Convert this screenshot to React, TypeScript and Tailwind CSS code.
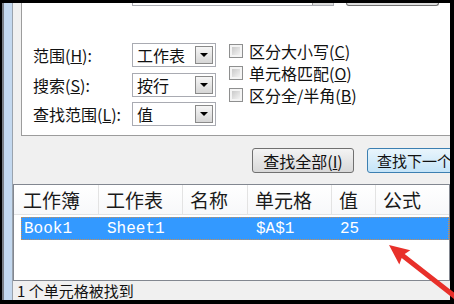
import React from "react";

function Combo({ text }: { text: string }) {
  return (
    <div className="w-[84px] h-[24px] bg-white border border-[#a9abb2] flex items-center justify-between pl-[4px] pr-[2px]">
      <span className="text-[16px] leading-none text-[#111]">{text}</span>
      <div className="w-[18px] h-[18px] border border-[#8a8a8a] bg-linear-to-b from-[#f6f6f6] to-[#d6d6d6] flex items-center justify-center">
        <div className="w-0 h-0 border-l-[4px] border-r-[4px] border-t-[4px] border-l-transparent border-r-transparent border-t-black" />
      </div>
    </div>
  );
}

function Check({ children }: { children: React.ReactNode }) {
  return (
    <div className="h-[22px] flex items-center">
      <div className="w-[14px] h-[14px] border border-[#8e8f8f] bg-[#f4f4f4] p-[2px]">
        <div className="w-full h-full bg-linear-to-br from-[#c9c9c9] to-[#f3f3f3]" />
      </div>
      <span className="ml-[6px] text-[16px] leading-none text-[#111]">{children}</span>
    </div>
  );
}

function Label({ children }: { children: React.ReactNode }) {
  return <div className="w-[99px] text-[16px] leading-none text-[#111]">{children}</div>;
}

const cols = [
  { w: 85, t: "工作簿", pl: 9 },
  { w: 84, t: "工作表", pl: 7 },
  { w: 65, t: "名称", pl: 7 },
  { w: 84, t: "单元格", pl: 7 },
  { w: 44, t: "值", pl: 7 },
  { w: 80, t: "公式", pl: 7 },
];

export default function App() {
  return (
    <div className="w-[454px] h-[304px] bg-black flex flex-col relative overflow-hidden font-['Noto_Sans_CJK_SC',sans-serif]">
      <div className="h-[3px] shrink-0" />
      <div className="flex h-[297px]">
        <div className="w-[2px] shrink-0" />
        <div className="w-[2px] shrink-0 bg-[#7b8088]" />
        <div className="w-[8px] shrink-0 bg-[#c3d8ef]" />
        <div className="w-[1px] shrink-0 bg-[#9aa3ad]" />
        <div className="w-[437px] shrink-0 bg-[#f0f0f0] flex flex-col overflow-hidden">
          {/* tab page */}
          <div className="ml-[8px] h-[133px] shrink-0 bg-white border-l border-b border-[#9c9c9c] flex flex-col">
            <div className="h-[3px] flex">
              <div className="ml-[110px] w-[202px] h-[3px] border-x border-b border-[#abadb3] flex justify-end">
                <div className="w-[21px] h-[2px] bg-[#dcdcdc] border-l border-[#9a9a9a]" />
              </div>
              <div className="ml-[12px] w-[93px] h-[3px] border-x border-b border-[#707070] rounded-b-[3px] bg-[#dedede]" />
            </div>
            <div className="mt-[34px] flex items-start">
              <div className="ml-[11px] pt-[3px] flex flex-col">
                <div className="h-[24px] flex items-center">
                  <Label>
                    范围(<span className="underline">H</span>):
                  </Label>
                  <Combo text="工作表" />
                </div>
                <div className="mt-[6px] h-[24px] flex items-center">
                  <Label>
                    搜索(<span className="underline">S</span>):
                  </Label>
                  <Combo text="按行" />
                </div>
                <div className="mt-[5px] h-[24px] flex items-center">
                  <Label>
                    查找范围(<span className="underline">L</span>):
                  </Label>
                  <Combo text="值" />
                </div>
              </div>
              <div className="ml-[13px] flex flex-col">
                <Check>
                  区分大小写(<span className="underline">C</span>)
                </Check>
                <Check>
                  单元格匹配(<span className="underline">O</span>)
                </Check>
                <Check>
                  区分全/半角(<span className="underline">B</span>)
                </Check>
              </div>
            </div>
          </div>
          {/* buttons */}
          <div className="mt-[12px] mb-[11px] h-[25px] flex shrink-0">
            <div className="ml-[239px] w-[102px] h-[25px] shrink-0 border border-[#707070] rounded-[3px] bg-linear-to-b from-[#f4f4f4] to-[#d8d8d8] flex items-center justify-center text-[16px] leading-none text-[#111]">
              查找全部(<span className="underline">I</span>)
            </div>
            <div className="ml-[13px] w-[112px] h-[25px] shrink-0 border border-[#3c7fb1] rounded-[3px] bg-linear-to-b from-[#e9f5fc] to-[#c4e4f8] flex items-center pl-[9px] text-[15px] leading-none text-[#111] whitespace-nowrap">
              查找下一个(<span className="underline">F</span>)
            </div>
          </div>
          {/* list view */}
          <div className="h-[97px] shrink-0 bg-white border border-[#828790] flex flex-col">
            <div className="h-[30px] flex border-b border-[#e3e3e3] bg-linear-to-b from-[#ffffff] to-[#f7f8fa]">
              {cols.map((c, i) => (
                <div
                  key={i}
                  style={{ width: c.w, paddingLeft: c.pl }}
                  className={
                    "shrink-0 h-full flex items-center text-[19px] leading-none text-[#1a1a1a] " +
                    (i < cols.length - 1 ? "border-r border-[#e3e3e3]" : "")
                  }
                >
                  {c.t}
                </div>
              ))}
            </div>
            <div className="mt-[2px] ml-[7px] h-[23px] bg-[#3399ff] border border-dotted border-[#c98f55] flex items-center font-['Liberation_Mono',monospace] text-[16px] leading-none text-white">
              <div className="w-[77px] pl-[2px] shrink-0">Book1</div>
              <div className="w-[84px] pl-[8px] shrink-0">Sheet1</div>
              <div className="w-[65px] pl-[8px] shrink-0"></div>
              <div className="w-[84px] pl-[8px] shrink-0">$A$1</div>
              <div className="w-[44px] pl-[8px] shrink-0">25</div>
            </div>
          </div>
          {/* status */}
          <div className="h-[19px] shrink-0 flex items-center pl-[4px] text-[15px] leading-none text-[#111] whitespace-nowrap">
            1 个单元格被找到
          </div>
        </div>
      </div>
      <div className="h-[4px] shrink-0" />
      <svg className="absolute inset-0 pointer-events-none" width="454" height="304" viewBox="0 0 454 304">
        <polygon
          points="389,245 410.3,250.2 404.7,254.1 471.5,306.2 468.5,310.2 401.7,258.1 399.3,264.4"
          fill="#e8302a"
        />
      </svg>
    </div>
  );
}
